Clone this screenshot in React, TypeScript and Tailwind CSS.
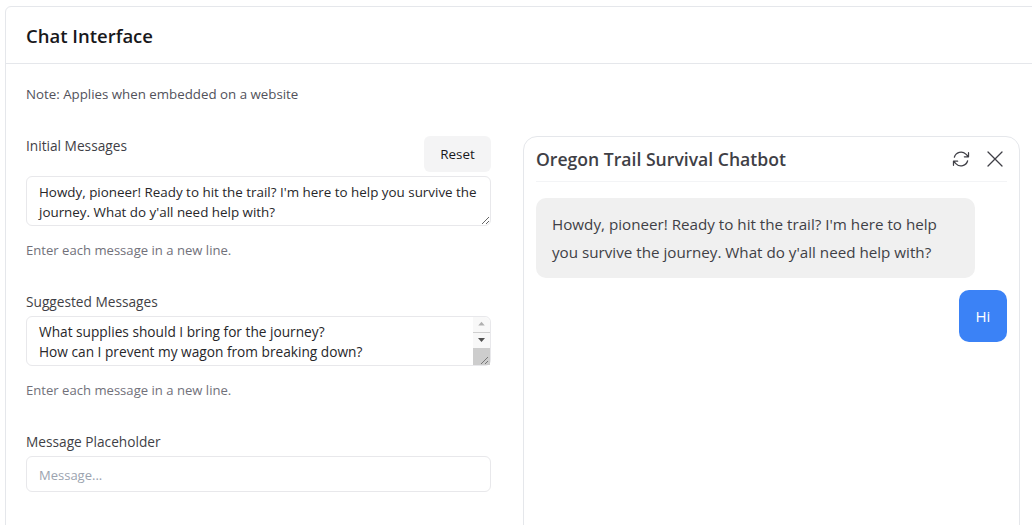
const font = "font-['Open_Sans','Noto_Sans',sans-serif]";

function Hint() {
  return <p className="mt-[14px] text-[13.1px] leading-[20px] text-[#71717a]">Enter each message in a new line.</p>;
}

export default function App() {
  return (
    <div className={`h-[525px] w-[1032px] overflow-hidden bg-white pl-[5px] pt-[6px] ${font}`}>
      <div className="w-[1060px] rounded-t-[6px] border border-[#e5e7eb] bg-white">
        <div className="flex h-[57px] items-center border-b border-[#e5e7eb] px-[20px] pt-[1px]">
          <h1 className="text-[18.5px] font-semibold leading-[28px] text-[#18181b]">Chat Interface</h1>
        </div>
        <div className="px-[20px] pt-[20px]">
          <p className="text-[13.3px] leading-[20px] text-[#52525b]">Note: Applies when embedded on a website</p>
          <div className="mt-[32px] flex gap-[32px]">
            <div className="w-[465px] shrink-0">
              <div className="flex items-start justify-between">
                <label className="text-[13.7px] font-medium leading-[20px] text-[#3f3f46]">Initial Messages</label>
                <button className="h-[36px] w-[67px] rounded-[6px] bg-[#f4f4f5] text-[13.4px] font-medium text-[#18181b]">Reset</button>
              </div>
              <textarea
                readOnly
                rows={2}
                className="mt-[4px] block h-[50px] w-full resize-y overflow-hidden rounded-[6px] border border-[#e8e8eb] py-[5px] pl-[12px] pr-[10px] text-[13.4px] leading-[20px] text-[#27272a] outline-none"
                defaultValue="Howdy, pioneer! Ready to hit the trail? I'm here to help you survive the journey. What do y'all need help with?"
              />
              <Hint />
              <label className="mt-[32px] block text-[13.7px] font-medium leading-[20px] text-[#3f3f46]">Suggested Messages</label>
              <div className="relative mt-[4px] h-[50px]">
                <textarea
                  readOnly
                  rows={2}
                  className="block h-[50px] w-full resize-y overflow-hidden rounded-[6px] border border-[#e8e8eb] px-[12px] py-[5px] text-[13.7px] leading-[20px] text-[#27272a] outline-none"
                  defaultValue={"What supplies should I bring for the journey?\nHow can I prevent my wagon from breaking down?\nWhat should I do if someone gets sick?"}
                />
                <div className="pointer-events-none absolute right-[1px] top-[1px] flex h-[48px] w-[17px] flex-col items-center rounded-tr-[6px] bg-[#f8f8f8]">
                  <svg width="17" height="16" viewBox="0 0 17 16" className="shrink-0 border-b border-[#cfcfcf]"><path d="M8.5 5 L12 9 L5 9 Z" fill="#b0b0b0" /></svg>
                  <svg width="17" height="15" viewBox="0 0 17 15" className="shrink-0"><path d="M5 5 L12 5 L8.5 9 Z" fill="#505050" /></svg>
                  <div className="h-[17px] w-[17px] bg-[#cdcdcd]">
                    <svg width="17" height="17" viewBox="0 0 17 17"><path d="M8 16 L15 9 M12 16 L15 13" stroke="#777" strokeWidth="1" /></svg>
                  </div>
                </div>
              </div>
              <Hint />
              <label className="mt-[32px] block text-[13.7px] font-medium leading-[20px] text-[#3f3f46]">Message Placeholder</label>
              <input
                readOnly
                placeholder="Message..."
                className="mt-[4px] block h-[36px] w-full rounded-[6px] border border-[#e8e8eb] px-[12px] pt-[1px] text-[13px] outline-none placeholder:text-[#9ca3af]"
              />
            </div>
            <div className="h-[500px] w-[497px] shrink-0 rounded-[14px] border border-[#e5e7eb] bg-white px-[12px]">
              <div className="flex h-[45px] items-center justify-between border-b border-[#f3f4f6]">
                <h2 className="text-[17.6px] font-semibold leading-[24px] text-[#3f3f46]">Oregon Trail Survival Chatbot</h2>
                <div className="flex items-center gap-[14px] pr-[2px] text-[#3f3f46]">
                  <svg width="20" height="20" viewBox="0 0 24 24" fill="none" stroke="currentColor" strokeWidth="1.5" strokeLinecap="round" strokeLinejoin="round">
                    <path d="M16.023 9.348h4.992v-.001M2.985 19.644v-4.992m0 0h4.992m-4.993 0l3.181 3.183a8.25 8.25 0 0013.803-3.7M4.031 9.865a8.25 8.25 0 0113.803-3.7l3.181 3.182m0-4.991v4.99" />
                  </svg>
                  <svg width="20" height="20" viewBox="0 0 20 20" fill="none" stroke="currentColor" strokeWidth="1.3" strokeLinecap="round">
                    <path d="M3 3 L17 17 M17 3 L3 17" />
                  </svg>
                </div>
              </div>
              <div className="flex flex-col pt-[16px]">
                <div className="w-[439px] rounded-[10px] bg-[#f0f0f0] px-[16px] py-[12px] text-[15.2px] leading-[28px] text-[#3f3f46]">
                  Howdy, pioneer! Ready to hit the trail? I'm here to help you survive the journey. What do y'all need help with?
                </div>
                <div className="mt-[12px] flex h-[52px] w-[48px] items-center justify-center self-end rounded-[10px] bg-[#3b82f6] text-[15px] text-white">Hi</div>
              </div>
            </div>
          </div>
        </div>
      </div>
    </div>
  );
}
